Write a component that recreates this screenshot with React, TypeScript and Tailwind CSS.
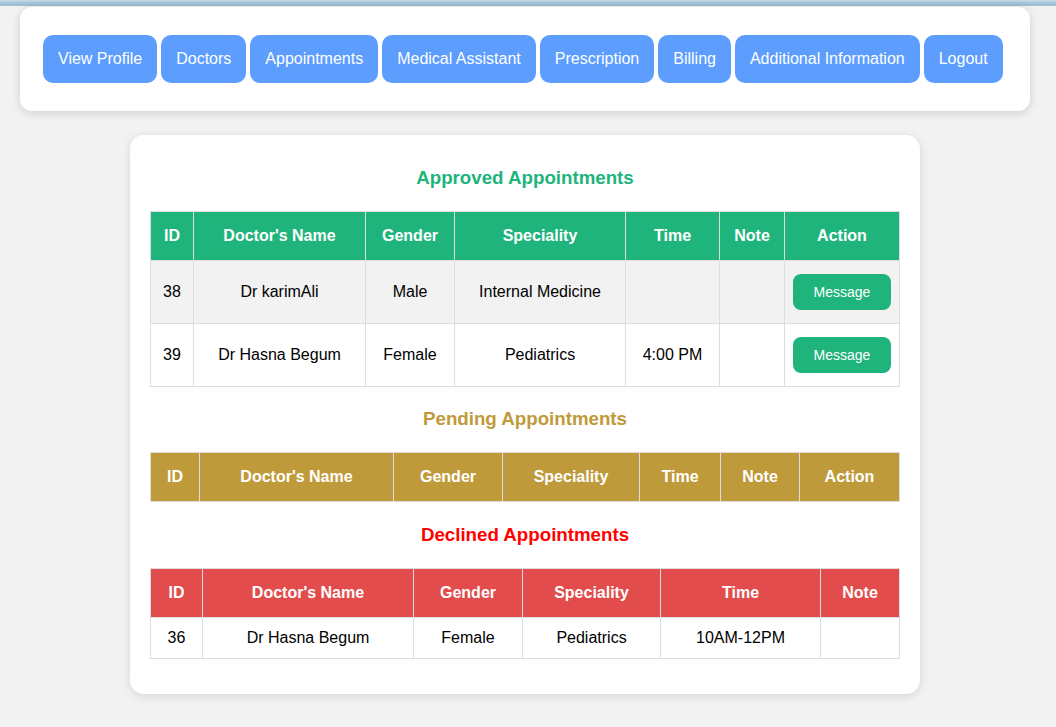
import React from 'react';

type Col = { label: string; w: string };

const navItems = [
    'View Profile',
    'Doctors',
    'Appointments',
    'Medical Assistant',
    'Prescription',
    'Billing',
    'Additional Information',
    'Logout',
];

const approvedCols: Col[] = [
    { label: 'ID', w: 'w-[43px]' },
    { label: "Doctor's Name", w: 'w-[172px]' },
    { label: 'Gender', w: 'w-[89px]' },
    { label: 'Speciality', w: 'w-[171px]' },
    { label: 'Time', w: 'w-[94px]' },
    { label: 'Note', w: 'w-[65px]' },
    { label: 'Action', w: 'w-[115px]' },
];

const pendingCols: Col[] = [
    { label: 'ID', w: 'w-[49px]' },
    { label: "Doctor's Name", w: 'w-[194px]' },
    { label: 'Gender', w: 'w-[109px]' },
    { label: 'Speciality', w: 'w-[137px]' },
    { label: 'Time', w: 'w-[81px]' },
    { label: 'Note', w: 'w-[79px]' },
    { label: 'Action', w: 'w-[100px]' },
];

const declinedCols: Col[] = [
    { label: 'ID', w: 'w-[52px]' },
    { label: "Doctor's Name", w: 'w-[211px]' },
    { label: 'Gender', w: 'w-[109px]' },
    { label: 'Speciality', w: 'w-[138px]' },
    { label: 'Time', w: 'w-[160px]' },
    { label: 'Note', w: 'w-[79px]' },
];

const approved = [
    { id: 38, name: 'Dr karimAli', gender: 'Male', speciality: 'Internal Medicine', time: '', note: '' },
    { id: 39, name: 'Dr Hasna Begum', gender: 'Female', speciality: 'Pediatrics', time: '4:00 PM', note: '' },
];

const declined = [
    { id: 36, name: 'Dr Hasna Begum', gender: 'Female', speciality: 'Pediatrics', time: '10AM-12PM', note: '' },
];

function TableHead({ cols, bg }: { cols: Col[]; bg: string }) {
    return (
        <thead>
            <tr className={`${bg} h-[49px]`}>
                {cols.map((c) => (
                    <th key={c.label} className={`${c.w} border border-[#dddddd] p-0 text-center text-base font-bold text-white`}>
                        {c.label}
                    </th>
                ))}
            </tr>
        </thead>
    );
}

function SectionTitle({ color, className = 'mt-5', children }: { color: string; className?: string; children: React.ReactNode }) {
    return <h3 className={`${className} mb-[22px] h-[23px] text-center text-[18.72px] font-bold leading-[23px] ${color}`}>{children}</h3>;
}

export default function App() {
    return (
        <div className="min-h-[727px] bg-[#f2f2f2] font-['Liberation_Sans',Arial,sans-serif] text-black">
            {/* top strip */}
            <div className="h-[6px] bg-gradient-to-b from-[#c9dce8] via-[#a6c4d8] to-[#9dbdd2]" />

            {/* Nav card */}
            <div className="ml-5 mr-[26px] mt-px rounded-xl bg-white py-7 pl-[23px] shadow-[0_2px_10px_rgba(0,0,0,0.15)]">
                <div className="flex gap-1">
                    {navItems.map((item) => (
                        <button
                            key={item}
                            className="h-12 rounded-[10px] bg-[#5c9dfe] px-[15px] text-base text-white"
                        >
                            {item}
                        </button>
                    ))}
                </div>
            </div>

            {/* Appointments card */}
            <div className="ml-[130px] mt-6 w-[790px] rounded-[14px] bg-white px-5 pt-[11px] pb-[35px] shadow-[0_2px_10px_rgba(0,0,0,0.12)]">
                <SectionTitle color="text-[#20b47d]">Approved Appointments</SectionTitle>
                <table className="w-[749px] table-fixed border-collapse">
                    <TableHead cols={approvedCols} bg="bg-[#20b47d]" />
                    <tbody>
                        {approved.map((r, i) => (
                            <tr key={r.id} className={`h-[63px] ${i % 2 === 0 ? 'bg-[#f2f2f2]' : 'bg-white'}`}>
                                <td className="border border-[#dddddd] p-0 text-center text-base">{r.id}</td>
                                <td className="border border-[#dddddd] p-0 text-center text-base">{r.name}</td>
                                <td className="border border-[#dddddd] p-0 text-center text-base">{r.gender}</td>
                                <td className="border border-[#dddddd] p-0 text-center text-base">{r.speciality}</td>
                                <td className="border border-[#dddddd] p-0 text-center text-base">{r.time}</td>
                                <td className="border border-[#dddddd] p-0 text-center text-base">{r.note}</td>
                                <td className="border border-[#dddddd] p-0 text-center">
                                    <button className="h-9 w-[98px] rounded-lg bg-[#20b47d] text-sm text-white">
                                        Message
                                    </button>
                                </td>
                            </tr>
                        ))}
                    </tbody>
                </table>

                <SectionTitle color="text-[#bf9a3b]">Pending Appointments</SectionTitle>
                <table className="w-[749px] table-fixed border-collapse">
                    <TableHead cols={pendingCols} bg="bg-[#bf9a3b]" />
                    <tbody />
                </table>

                <SectionTitle color="text-[#ff0000]" className="mt-[21px]">Declined Appointments</SectionTitle>
                <table className="w-[749px] table-fixed border-collapse">
                    <TableHead cols={declinedCols} bg="bg-[#e24c4c]" />
                    <tbody>
                        {declined.map((r) => (
                            <tr key={r.id} className="h-[41px] bg-white">
                                <td className="border border-[#dddddd] p-0 text-center text-base">{r.id}</td>
                                <td className="border border-[#dddddd] p-0 text-center text-base">{r.name}</td>
                                <td className="border border-[#dddddd] p-0 text-center text-base">{r.gender}</td>
                                <td className="border border-[#dddddd] p-0 text-center text-base">{r.speciality}</td>
                                <td className="border border-[#dddddd] p-0 text-center text-base">{r.time}</td>
                                <td className="border border-[#dddddd] p-0 text-center text-base">{r.note}</td>
                            </tr>
                        ))}
                    </tbody>
                </table>
            </div>
        </div>
    );
}
